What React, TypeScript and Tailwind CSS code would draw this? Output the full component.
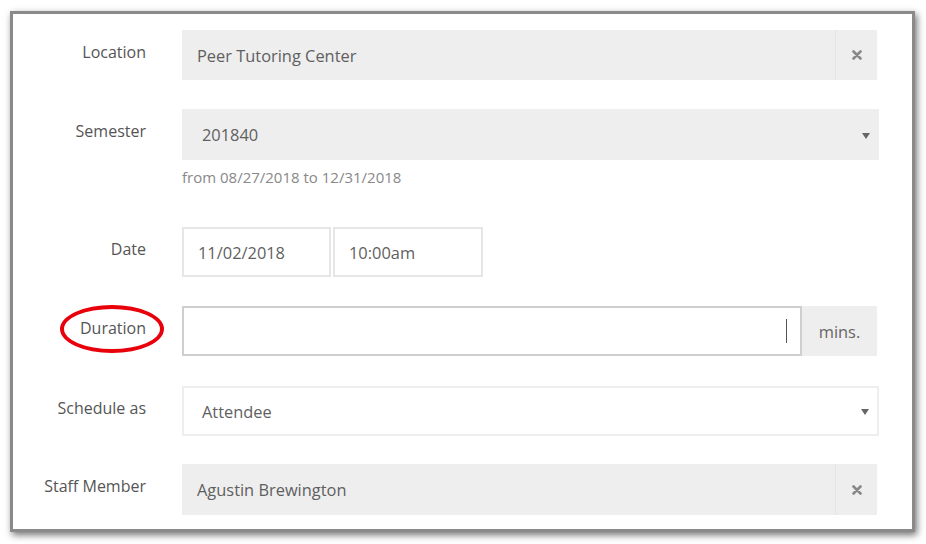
import React from "react"

const font = { fontFamily: '"Open Sans", "Liberation Sans", sans-serif' }

function Label({ children }: { children: React.ReactNode }) {
  return <div className="w-[133px] shrink-0 pt-[11px] text-right text-[16px] leading-[22px] text-[#555]">{children}</div>
}

function ClearIcon() {
  return (
    <svg width="10" height="10" viewBox="0 0 10 10">
      <path d="M1.5 1.5 L8.5 8.5 M8.5 1.5 L1.5 8.5" stroke="#888" strokeWidth="2.6" strokeLinecap="round" />
    </svg>
  )
}

function Caret() {
  return <span className="block h-0 w-0 border-x-[4px] border-t-[6px] border-x-transparent border-t-[#666]" />
}

export default function App() {
  return (
    <div className="h-[544px] w-[926px] overflow-hidden bg-white" style={font}>
      <div className="ml-[10px] mt-[11px] h-[521px] w-[905px] border-[3px] border-[#8a8a8a] bg-white shadow-[2px_3px_7px_rgba(0,0,0,0.55)]">
        <div className="relative flex flex-col pt-[16px]">
          {/* Location */}
          <div className="flex gap-[36px]">
            <Label>Location</Label>
            <div className="flex h-[50px] w-[695px] bg-[#eeeeee]">
              <div className="flex flex-1 items-center px-[15px] pt-[2px] text-[16.4px] text-[#5f5f5f]">Peer Tutoring Center</div>
              <div className="flex w-[42px] items-center justify-center border-l border-[#e4e4e4]">
                <ClearIcon />
              </div>
            </div>
          </div>

          {/* Semester */}
          <div className="mt-[29px] flex gap-[36px]">
            <Label>Semester</Label>
            <div className="flex flex-col">
              <div className="flex h-[51px] w-[697px] items-center justify-between bg-[#eeeeee] pl-[20px] pr-[9px] pt-[2px] text-[16.4px] text-[#5f5f5f]">
                <span>201840</span>
                <Caret />
              </div>
              <div className="mt-[7px] text-[15px] leading-[20px] text-[#888]">from 08/27/2018 to 12/31/2018</div>
            </div>
          </div>

          {/* Date */}
          <div className="mt-[40px] flex gap-[36px]">
            <Label>Date</Label>
            <div className="flex gap-[2px]">
              <div className="flex h-[50px] w-[149px] items-center border-2 border-[#e6e6e6] px-[14px] pt-[2px] text-[16.4px] text-[#5f5f5f]">11/02/2018</div>
              <div className="flex h-[50px] w-[150px] items-center border-2 border-[#e6e6e6] px-[14px] pt-[2px] text-[16.4px] text-[#5f5f5f]">10:00am</div>
            </div>
          </div>

          {/* Duration */}
          <div className="mt-[29px] flex gap-[36px]">
            <div className="relative">
              <Label>Duration</Label>
              <div className="absolute left-[47px] top-[-1px] h-[48px] w-[104px] rounded-[50%] border-[4px] border-[#e8000b]" />
            </div>
            <div className="flex h-[50px] w-[695px]">
              <div className="flex flex-1 items-center justify-end border-2 border-[#cfcfcf] pr-[13px]">
                <span className="block h-[24px] w-[1px] bg-[#555]" />
              </div>
              <div className="flex w-[75px] items-center justify-center bg-[#eeeeee] pt-[2px] text-[16.4px] text-[#666]">mins.</div>
            </div>
          </div>

          {/* Schedule as */}
          <div className="mt-[30px] flex gap-[36px]">
            <Label>Schedule as</Label>
            <div className="flex h-[50px] w-[697px] items-center justify-between border-2 border-[#eeeeee] pl-[18px] pr-[8px] pt-[2px] text-[16.4px] text-[#5f5f5f]">
              <span>Attendee</span>
              <Caret />
            </div>
          </div>

          {/* Staff Member */}
          <div className="mt-[28px] flex gap-[36px]">
            <Label>Staff Member</Label>
            <div className="flex h-[51px] w-[695px] bg-[#eeeeee]">
              <div className="flex flex-1 items-center px-[15px] pt-[2px] text-[16.4px] text-[#5f5f5f]">Agustin Brewington</div>
              <div className="flex w-[42px] items-center justify-center border-l border-[#e4e4e4]">
                <ClearIcon />
              </div>
            </div>
          </div>
        </div>
      </div>
    </div>
  )
}
